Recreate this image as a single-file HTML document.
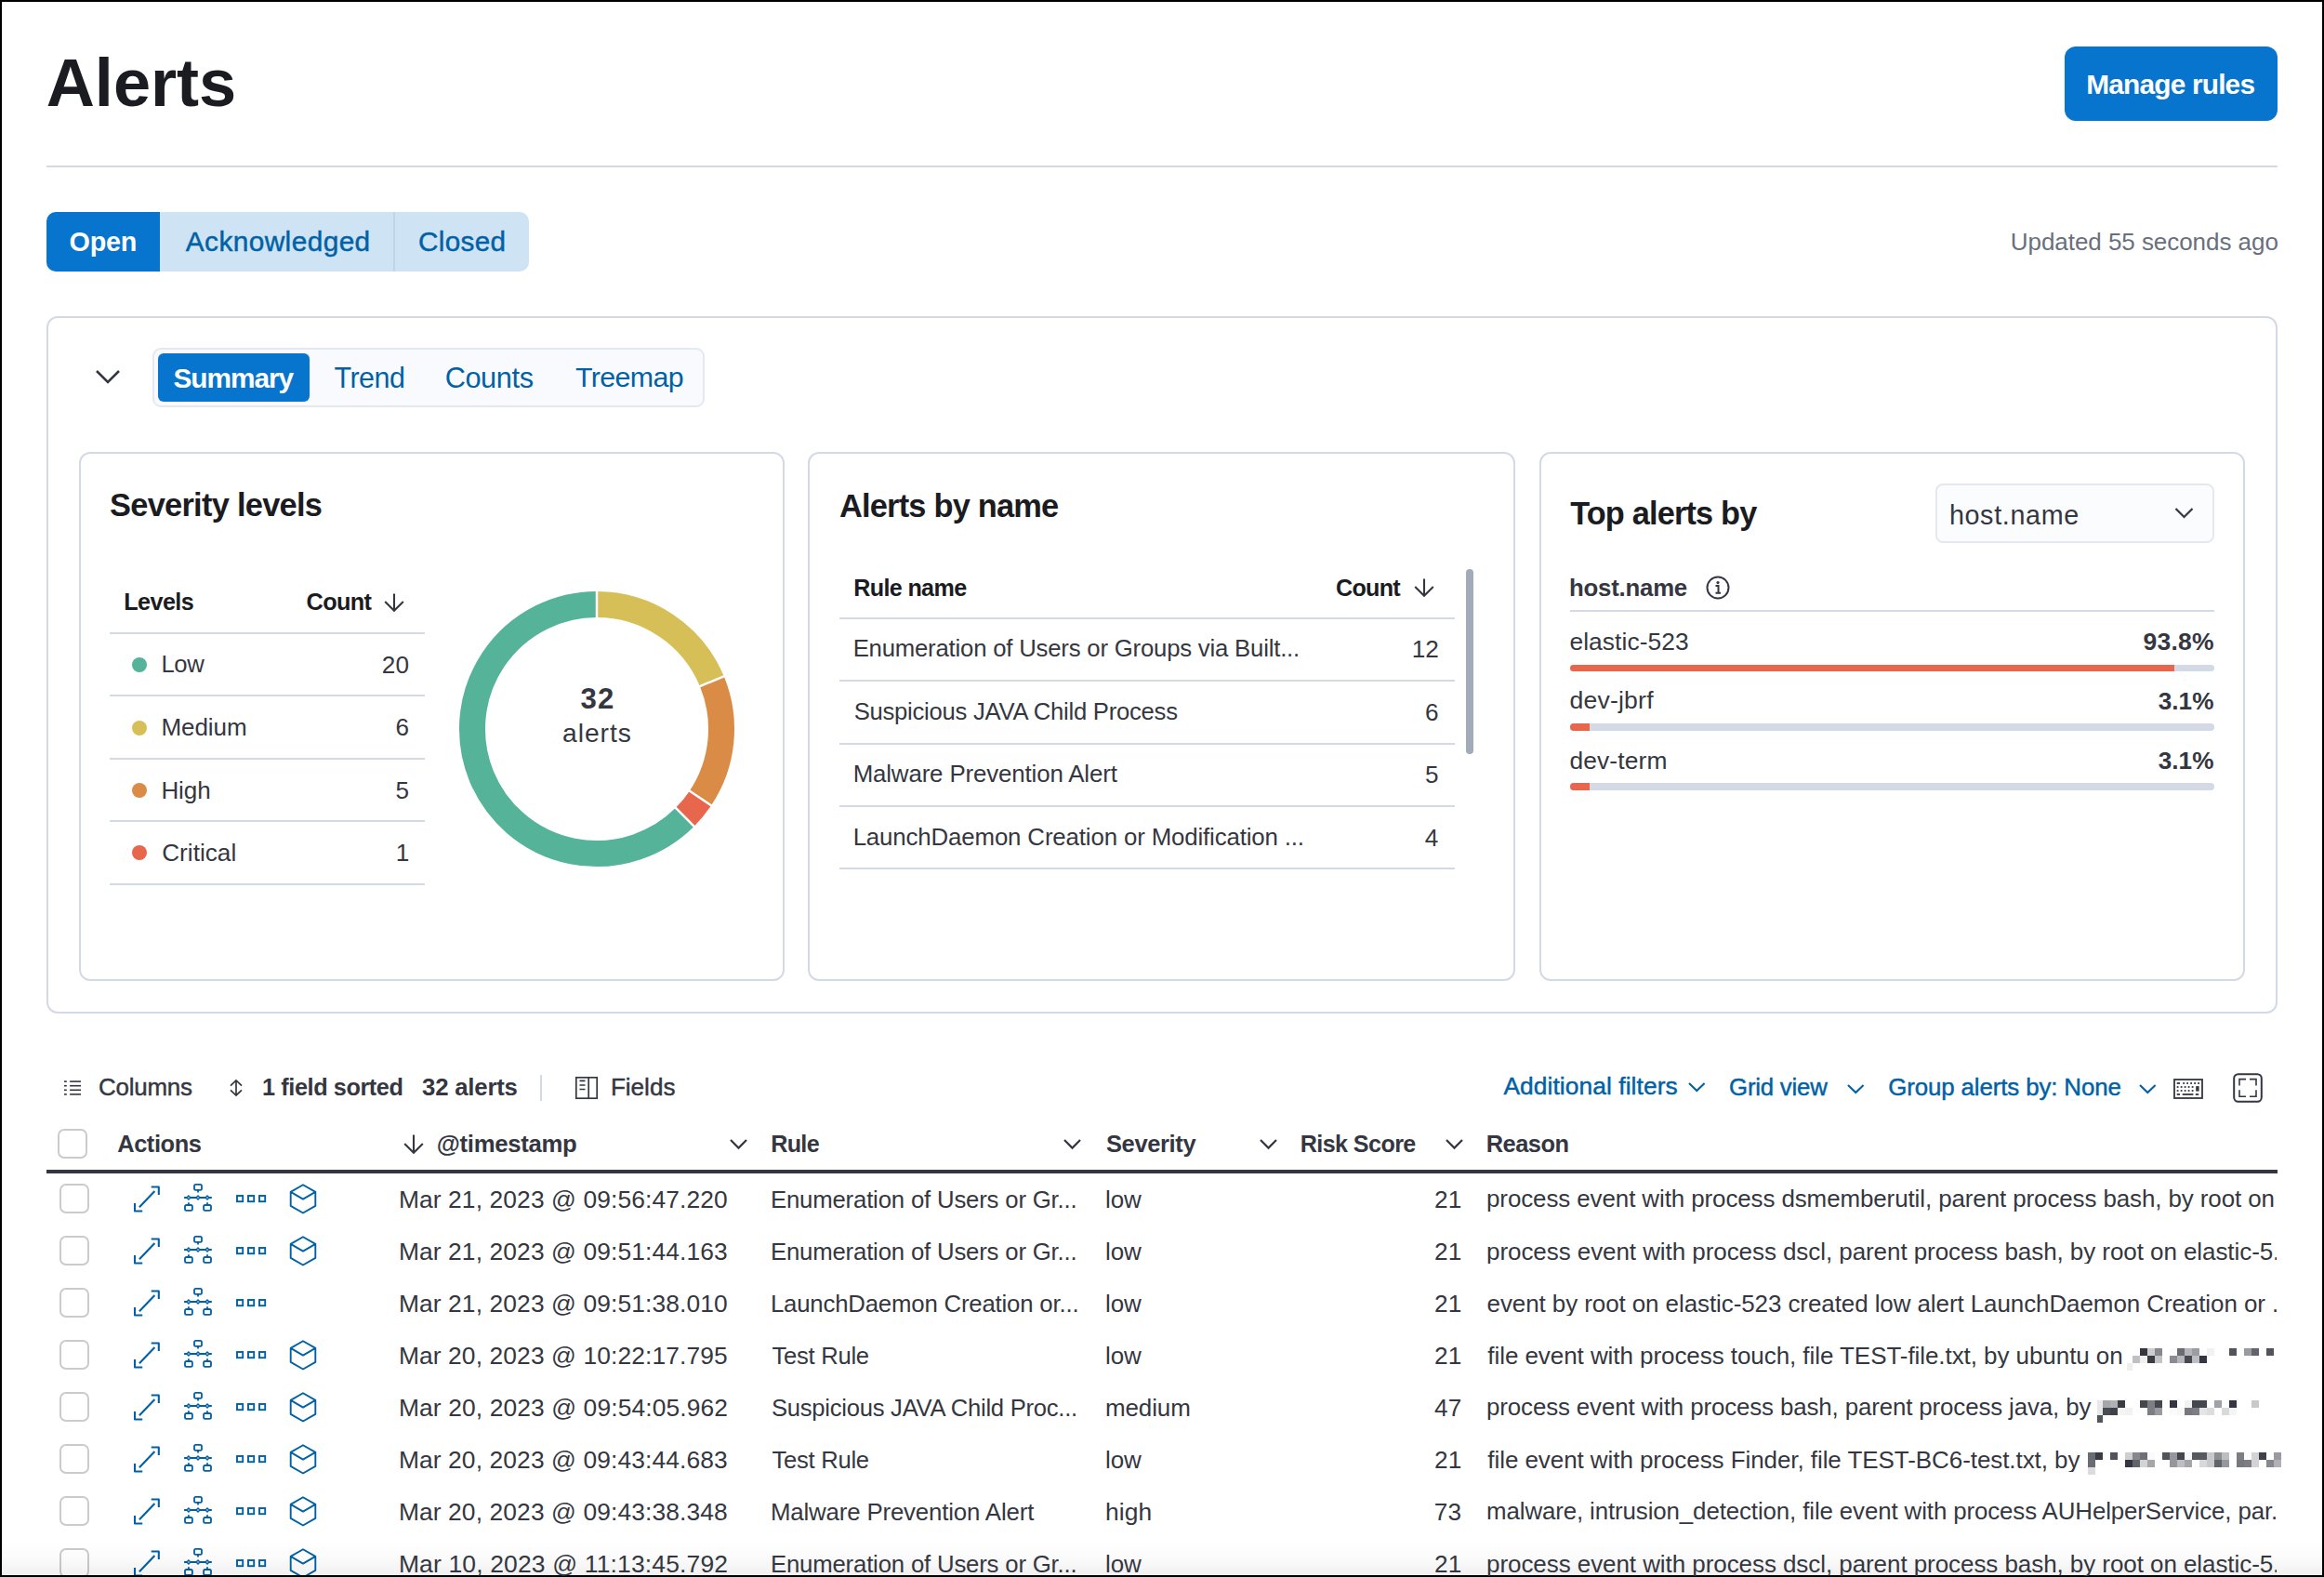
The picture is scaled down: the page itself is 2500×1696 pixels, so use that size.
<!DOCTYPE html>
<html><head><meta charset="utf-8"><style>
html,body{margin:0;padding:0;}
body{width:2500px;height:1696px;position:relative;overflow:hidden;background:#FFFFFF;font-family:"Liberation Sans",sans-serif;}
.t{position:absolute;white-space:nowrap;}
.a{position:absolute;box-sizing:border-box;}
svg{position:absolute;overflow:visible;}
</style></head><body>
<div class=a style="left:2221px;top:50px;width:229px;height:80px;background:#0774CE;border-radius:12px"></div>
<div class=a style="left:50px;top:178px;width:2400px;height:2px;background:#D3DAE6"></div>
<div class=a style="left:50px;top:228px;width:519px;height:64px;background:#CEE3F3;border-radius:10px"></div>
<div class=a style="left:50px;top:228px;width:122px;height:64px;background:#0774CE;border-radius:10px 0 0 10px"></div>
<div class=a style="left:423px;top:228px;width:2px;height:64px;background:#C1D5E6"></div>
<div class=a style="left:50px;top:340px;width:2400px;height:750px;border:2px solid #D3DAE6;border-radius:12px"></div>
<svg style="left:100px;top:394px" width="32" height="24" viewBox="0 0 32 24"><path d="M4 5 L16 17 L28 5" fill="none" stroke="#343741" stroke-width="2.6"/></svg>
<div class=a style="left:164px;top:374px;width:594px;height:64px;border:2px solid #E3E8F2;background:#F9FAFD;border-radius:9px"></div>
<div class=a style="left:170px;top:380px;width:163px;height:52px;background:#0774CE;border-radius:6px"></div>
<div class=a style="left:85px;top:486px;width:759px;height:569px;border:2px solid #D3DAE6;border-radius:12px"></div>
<div class=a style="left:869px;top:486px;width:761px;height:569px;border:2px solid #D3DAE6;border-radius:12px"></div>
<div class=a style="left:1656px;top:486px;width:759px;height:569px;border:2px solid #D3DAE6;border-radius:12px"></div>
<div class=a style="left:118px;top:680px;width:339px;height:2px;background:#D3DAE6"></div>
<div class=a style="left:118px;top:747px;width:339px;height:2px;background:#D3DAE6"></div>
<div class=a style="left:118px;top:815px;width:339px;height:2px;background:#D3DAE6"></div>
<div class=a style="left:118px;top:882px;width:339px;height:2px;background:#D3DAE6"></div>
<div class=a style="left:118px;top:950px;width:339px;height:2px;background:#D3DAE6"></div>
<div class=a style="left:142px;top:707px;width:16px;height:16px;background:#54B399;border-radius:50%"></div>
<div class=a style="left:142px;top:774.5px;width:16px;height:16.0px;background:#D6BF57;border-radius:50%"></div>
<div class=a style="left:142px;top:842px;width:16px;height:16px;background:#DA8B45;border-radius:50%"></div>
<div class=a style="left:142px;top:909.3px;width:16px;height:16.0px;background:#E7664C;border-radius:50%"></div>
<svg style="left:413px;top:638px" width="22" height="20" viewBox="0 0 22 20"><path d="M11.0 0.5 V18.7 M1.2 9 L11.0 18.7 L20.8 9" fill="none" stroke="#343741" stroke-width="2.1"/></svg>
<svg style="left:1521px;top:621.5px" width="22" height="20" viewBox="0 0 22 20"><path d="M11.0 0.5 V18.7 M1.2 9 L11.0 18.7 L20.8 9" fill="none" stroke="#343741" stroke-width="2.1"/></svg>
<svg style="left:481.70000000000005px;top:623.8px" width="320" height="320" viewBox="-160 -160 320 320"><path d="M0.00 -134.00 A134.0 134.0 0 0 1 123.80 -51.28" fill="none" stroke="#D6BF57" stroke-width="28"/><path d="M123.80 -51.28 A134.0 134.0 0 0 1 111.42 74.45" fill="none" stroke="#DA8B45" stroke-width="28"/><path d="M111.42 74.45 A134.0 134.0 0 0 1 94.75 94.75" fill="none" stroke="#E7664C" stroke-width="28"/><path d="M94.75 94.75 A134.0 134.0 0 1 1 -0.00 -134.00" fill="none" stroke="#54B399" stroke-width="28"/><line x1="109.02" y1="-45.16" x2="138.58" y2="-57.40" stroke="#FFFFFF" stroke-width="2.5"/><line x1="98.11" y1="65.56" x2="124.72" y2="83.34" stroke="#FFFFFF" stroke-width="2.5"/><line x1="83.44" y1="83.44" x2="106.07" y2="106.07" stroke="#FFFFFF" stroke-width="2.5"/><line x1="-0.00" y1="-118.00" x2="-0.00" y2="-150.00" stroke="#FFFFFF" stroke-width="2.5"/></svg>
<div class=a style="left:903px;top:664px;width:662px;height:2px;background:#D3DAE6"></div>
<div class=a style="left:903px;top:731px;width:662px;height:2px;background:#D3DAE6"></div>
<div class=a style="left:903px;top:799px;width:662px;height:2px;background:#D3DAE6"></div>
<div class=a style="left:903px;top:866px;width:662px;height:2px;background:#D3DAE6"></div>
<div class=a style="left:903px;top:933px;width:662px;height:2px;background:#D3DAE6"></div>
<div class=a style="left:1577px;top:612px;width:8px;height:199px;background:#A2ABBA;border-radius:4px"></div>
<div class=a style="left:2082px;top:520px;width:300px;height:64px;border:2px solid #E3E8F2;background:#FBFCFD;border-radius:8px"></div>
<svg style="left:2338px;top:544px" width="24" height="16" viewBox="0 0 24 16"><path d="M2.5 3 L11.5 12 L20.5 3" fill="none" stroke="#343741" stroke-width="2.2"/></svg>
<svg style="left:1834px;top:618px" width="28" height="28" viewBox="0 0 28 28"><circle cx="14" cy="14" r="11.5" fill="none" stroke="#343741" stroke-width="2"/><circle cx="14" cy="8.6" r="1.6" fill="#343741"/><path d="M11.5 12 H14.5 V19.5 M11.5 19.8 H17" fill="none" stroke="#343741" stroke-width="2"/></svg>
<div class=a style="left:1689px;top:655.5px;width:693px;height:2.0px;background:#D3DAE6"></div>
<div class=a style="left:1689px;top:714.5px;width:693px;height:7.5px;background:#D3DAE6;border-radius:4px"></div>
<div class=a style="left:1689px;top:714.5px;width:650px;height:7.5px;background:#E7664C;border-radius:4px 0 0 4px"></div>
<div class=a style="left:1689px;top:778.4px;width:693px;height:7.5px;background:#D3DAE6;border-radius:4px"></div>
<div class=a style="left:1689px;top:778.4px;width:21px;height:7.5px;background:#E7664C;border-radius:4px 0 0 4px"></div>
<div class=a style="left:1689px;top:842.3px;width:693px;height:7.5px;background:#D3DAE6;border-radius:4px"></div>
<div class=a style="left:1689px;top:842.3px;width:21px;height:7.5px;background:#E7664C;border-radius:4px 0 0 4px"></div>
<svg style="left:66px;top:1158px" width="26" height="24" viewBox="0 0 26 24"><rect x="3" y="4.3" width="2.8" height="1.6" fill="#343741"/><rect x="9.1" y="4.3" width="11.9" height="1.6" fill="#343741"/><rect x="3" y="8.899999999999999" width="2.8" height="1.6" fill="#343741"/><rect x="9.1" y="8.899999999999999" width="11.9" height="1.6" fill="#343741"/><rect x="3" y="13.5" width="2.8" height="1.6" fill="#343741"/><rect x="9.1" y="13.5" width="11.9" height="1.6" fill="#343741"/><rect x="3" y="18.099999999999998" width="2.8" height="1.6" fill="#343741"/><rect x="9.1" y="18.099999999999998" width="11.9" height="1.6" fill="#343741"/></svg>
<svg style="left:244px;top:1158px" width="20" height="24" viewBox="0 0 20 24"><path d="M10 4.2 V19.8 M4 9.6 L10 3.9 L16 9.6 M4 14.3 L10 20.0 L16 14.3" fill="none" stroke="#343741" stroke-width="1.7"/></svg>
<div class=a style="left:581px;top:1155.5px;width:2px;height:28.0px;background:#D3DAE6"></div>
<svg style="left:616px;top:1155px" width="30" height="30" viewBox="0 0 30 30"><rect x="3.8" y="3.8" width="22.4" height="22.4" fill="none" stroke="#343741" stroke-width="1.7"/><path d="M17.2 3.5 V26.5 M7.5 7.4 H13.5 M7.5 12 H13.5 M7.5 16.5 H13.5" fill="none" stroke="#343741" stroke-width="1.7"/></svg>
<svg style="left:1813.9px;top:1162.2px" width="22.6" height="14" viewBox="0 0 22.6 14"><path d="M3 3 L11.3 11 L19.6 3" fill="none" stroke="#0061A6" stroke-width="2.1"/></svg>
<svg style="left:1984.8px;top:1163.5px" width="22.6" height="14" viewBox="0 0 22.6 14"><path d="M3 3 L11.3 11 L19.6 3" fill="none" stroke="#0061A6" stroke-width="2.1"/></svg>
<svg style="left:2298.7px;top:1163.5px" width="22.6" height="14" viewBox="0 0 22.6 14"><path d="M3 3 L11.3 11 L19.6 3" fill="none" stroke="#0061A6" stroke-width="2.1"/></svg>
<svg style="left:2338px;top:1160px" width="32" height="23" viewBox="0 0 32 23"><rect x="1" y="1" width="30" height="20" fill="none" stroke="#343741" stroke-width="1.8"/><rect x="3.7" y="4.1" width="3.4" height="1.8" fill="#343741"/><rect x="10.2" y="4.1" width="1.8" height="1.8" fill="#343741"/><rect x="14.2" y="4.1" width="1.8" height="1.8" fill="#343741"/><rect x="18.2" y="4.1" width="1.8" height="1.8" fill="#343741"/><rect x="22.2" y="4.1" width="1.8" height="1.8" fill="#343741"/><rect x="26.2" y="4.1" width="1.8" height="1.8" fill="#343741"/><rect x="3.7" y="8.1" width="1.8" height="1.8" fill="#343741"/><rect x="7.7" y="8.1" width="1.8" height="1.8" fill="#343741"/><rect x="11.7" y="8.1" width="1.8" height="1.8" fill="#343741"/><rect x="15.7" y="8.1" width="1.8" height="1.8" fill="#343741"/><rect x="19.7" y="8.1" width="1.8" height="1.8" fill="#343741"/><rect x="3.7" y="12.1" width="1.8" height="1.8" fill="#343741"/><rect x="7.7" y="12.1" width="1.8" height="1.8" fill="#343741"/><rect x="11.7" y="12.1" width="1.8" height="1.8" fill="#343741"/><rect x="15.7" y="12.1" width="1.8" height="1.8" fill="#343741"/><rect x="19.7" y="12.1" width="1.8" height="1.8" fill="#343741"/><rect x="3.7" y="16.1" width="3.4" height="1.8" fill="#343741"/><rect x="9.7" y="16.1" width="11.7" height="1.8" fill="#343741"/><rect x="23.8" y="16.1" width="3.4" height="1.8" fill="#343741"/><rect x="24.2" y="8.1" width="3.4" height="5.5" fill="#343741"/></svg>
<svg style="left:2400px;top:1152px" width="36" height="36" viewBox="0 0 36 36"><rect x="3.2" y="3.2" width="29.6" height="29.6" rx="4.5" fill="none" stroke="#343741" stroke-width="2"/><path d="M16 8.6 H9 V15.6 M20 8.6 H27 V15.6 M9 20.2 V27.2 H16 M27 20.2 V27.2 H20" fill="none" stroke="#343741" stroke-width="1.6"/></svg>
<div class=a style="left:62px;top:1214px;width:32px;height:32px;border:2px solid #CACBCD;border-radius:7px;background:#fff"></div>
<svg style="left:434px;top:1220px" width="22" height="21" viewBox="0 0 22 21"><path d="M11.0 0.5 V19.7 M1.2 10 L11.0 19.7 L20.8 10" fill="none" stroke="#343741" stroke-width="2.1"/></svg>
<svg style="left:782.6px;top:1222.6px" width="23" height="14.6" viewBox="0 0 23 14.6"><path d="M3 3 L11.5 11.6 L20 3" fill="none" stroke="#343741" stroke-width="2.2"/></svg>
<svg style="left:1142.4px;top:1222.6px" width="23" height="14.6" viewBox="0 0 23 14.6"><path d="M3 3 L11.5 11.6 L20 3" fill="none" stroke="#343741" stroke-width="2.2"/></svg>
<svg style="left:1352.6px;top:1222.6px" width="23" height="14.6" viewBox="0 0 23 14.6"><path d="M3 3 L11.5 11.6 L20 3" fill="none" stroke="#343741" stroke-width="2.2"/></svg>
<svg style="left:1552.9px;top:1222.6px" width="23" height="14.6" viewBox="0 0 23 14.6"><path d="M3 3 L11.5 11.6 L20 3" fill="none" stroke="#343741" stroke-width="2.2"/></svg>
<div class=a style="left:50px;top:1258px;width:2400px;height:4px;background:#343741"></div>
<div class=a style="left:64px;top:1273.3px;width:32px;height:32.0px;border:2px solid #CACBCD;border-radius:7px;background:#fff"></div>
<svg style="left:142px;top:1273.5px" width="32" height="32" viewBox="0 0 32 32"><path d="M20.7 2.5 H28.8 V10.9 M3 19.9 V28.5 H11.2" fill="none" stroke="#0061A6" stroke-width="2.1" stroke-linejoin="round" stroke-linecap="butt"/><path d="M7.9 24.2 L24.4 7.1" fill="none" stroke="#0061A6" stroke-width="2.1"/></svg>
<svg style="left:197px;top:1273.0px" width="32" height="32" viewBox="0 0 32 32"><rect x="12.0" y="0.9" width="8.0" height="5.9" rx="1.6" fill="none" stroke="#0061A6" stroke-width="1.8"/><path d="M16 6.8 V9.6 M1.1 15 H30.8 M5.9 20.3 V23.1 M26.0 20.3 V23.1" stroke="#0061A6" stroke-width="1.8" fill="none"/><path d="M2.9000000000000004 15 L5.9 12.0 L8.9 15 L5.9 18.0 Z" fill="#0061A6"/><rect x="5.1000000000000005" y="14.2" width="1.6" height="1.6" fill="#A9C3DD"/><path d="M13.0 15 L16.0 12.0 L19.0 15 L16.0 18.0 Z" fill="#0061A6"/><rect x="15.2" y="14.2" width="1.6" height="1.6" fill="#A9C3DD"/><path d="M23.0 15 L26.0 12.0 L29.0 15 L26.0 18.0 Z" fill="#0061A6"/><rect x="25.2" y="14.2" width="1.6" height="1.6" fill="#A9C3DD"/><rect x="2.0" y="23.0" width="7.9" height="5.8" rx="1.6" fill="none" stroke="#0061A6" stroke-width="1.8"/><rect x="22.1" y="23.0" width="7.9" height="5.8" rx="1.6" fill="none" stroke="#0061A6" stroke-width="1.8"/></svg>
<svg style="left:254px;top:1284.7px" width="34" height="9" viewBox="0 0 34 9"><rect x="1" y="1" width="6.2" height="6.2" fill="none" stroke="#0061A6" stroke-width="1.9"/><rect x="13" y="1" width="6.2" height="6.2" fill="none" stroke="#0061A6" stroke-width="1.9"/><rect x="25" y="1" width="6.2" height="6.2" fill="none" stroke="#0061A6" stroke-width="1.9"/></svg>
<svg style="left:310px;top:1272.5px" width="32" height="34" viewBox="0 0 32 34"><path d="M16 1.3 L29.3 8.9 V23.9 L16 31.5 L2.7 23.9 V8.9 Z M2.7 8.9 L16 16.6 L29.3 8.9" fill="none" stroke="#0061A6" stroke-width="1.9" stroke-linejoin="round"/></svg>
<div class=a style="left:64px;top:1329.3px;width:32px;height:32.0px;border:2px solid #CACBCD;border-radius:7px;background:#fff"></div>
<svg style="left:142px;top:1329.5px" width="32" height="32" viewBox="0 0 32 32"><path d="M20.7 2.5 H28.8 V10.9 M3 19.9 V28.5 H11.2" fill="none" stroke="#0061A6" stroke-width="2.1" stroke-linejoin="round" stroke-linecap="butt"/><path d="M7.9 24.2 L24.4 7.1" fill="none" stroke="#0061A6" stroke-width="2.1"/></svg>
<svg style="left:197px;top:1329.0px" width="32" height="32" viewBox="0 0 32 32"><rect x="12.0" y="0.9" width="8.0" height="5.9" rx="1.6" fill="none" stroke="#0061A6" stroke-width="1.8"/><path d="M16 6.8 V9.6 M1.1 15 H30.8 M5.9 20.3 V23.1 M26.0 20.3 V23.1" stroke="#0061A6" stroke-width="1.8" fill="none"/><path d="M2.9000000000000004 15 L5.9 12.0 L8.9 15 L5.9 18.0 Z" fill="#0061A6"/><rect x="5.1000000000000005" y="14.2" width="1.6" height="1.6" fill="#A9C3DD"/><path d="M13.0 15 L16.0 12.0 L19.0 15 L16.0 18.0 Z" fill="#0061A6"/><rect x="15.2" y="14.2" width="1.6" height="1.6" fill="#A9C3DD"/><path d="M23.0 15 L26.0 12.0 L29.0 15 L26.0 18.0 Z" fill="#0061A6"/><rect x="25.2" y="14.2" width="1.6" height="1.6" fill="#A9C3DD"/><rect x="2.0" y="23.0" width="7.9" height="5.8" rx="1.6" fill="none" stroke="#0061A6" stroke-width="1.8"/><rect x="22.1" y="23.0" width="7.9" height="5.8" rx="1.6" fill="none" stroke="#0061A6" stroke-width="1.8"/></svg>
<svg style="left:254px;top:1340.7px" width="34" height="9" viewBox="0 0 34 9"><rect x="1" y="1" width="6.2" height="6.2" fill="none" stroke="#0061A6" stroke-width="1.9"/><rect x="13" y="1" width="6.2" height="6.2" fill="none" stroke="#0061A6" stroke-width="1.9"/><rect x="25" y="1" width="6.2" height="6.2" fill="none" stroke="#0061A6" stroke-width="1.9"/></svg>
<svg style="left:310px;top:1328.5px" width="32" height="34" viewBox="0 0 32 34"><path d="M16 1.3 L29.3 8.9 V23.9 L16 31.5 L2.7 23.9 V8.9 Z M2.7 8.9 L16 16.6 L29.3 8.9" fill="none" stroke="#0061A6" stroke-width="1.9" stroke-linejoin="round"/></svg>
<div class=a style="left:64px;top:1385.3px;width:32px;height:32.0px;border:2px solid #CACBCD;border-radius:7px;background:#fff"></div>
<svg style="left:142px;top:1385.5px" width="32" height="32" viewBox="0 0 32 32"><path d="M20.7 2.5 H28.8 V10.9 M3 19.9 V28.5 H11.2" fill="none" stroke="#0061A6" stroke-width="2.1" stroke-linejoin="round" stroke-linecap="butt"/><path d="M7.9 24.2 L24.4 7.1" fill="none" stroke="#0061A6" stroke-width="2.1"/></svg>
<svg style="left:197px;top:1385.0px" width="32" height="32" viewBox="0 0 32 32"><rect x="12.0" y="0.9" width="8.0" height="5.9" rx="1.6" fill="none" stroke="#0061A6" stroke-width="1.8"/><path d="M16 6.8 V9.6 M1.1 15 H30.8 M5.9 20.3 V23.1 M26.0 20.3 V23.1" stroke="#0061A6" stroke-width="1.8" fill="none"/><path d="M2.9000000000000004 15 L5.9 12.0 L8.9 15 L5.9 18.0 Z" fill="#0061A6"/><rect x="5.1000000000000005" y="14.2" width="1.6" height="1.6" fill="#A9C3DD"/><path d="M13.0 15 L16.0 12.0 L19.0 15 L16.0 18.0 Z" fill="#0061A6"/><rect x="15.2" y="14.2" width="1.6" height="1.6" fill="#A9C3DD"/><path d="M23.0 15 L26.0 12.0 L29.0 15 L26.0 18.0 Z" fill="#0061A6"/><rect x="25.2" y="14.2" width="1.6" height="1.6" fill="#A9C3DD"/><rect x="2.0" y="23.0" width="7.9" height="5.8" rx="1.6" fill="none" stroke="#0061A6" stroke-width="1.8"/><rect x="22.1" y="23.0" width="7.9" height="5.8" rx="1.6" fill="none" stroke="#0061A6" stroke-width="1.8"/></svg>
<svg style="left:254px;top:1396.7px" width="34" height="9" viewBox="0 0 34 9"><rect x="1" y="1" width="6.2" height="6.2" fill="none" stroke="#0061A6" stroke-width="1.9"/><rect x="13" y="1" width="6.2" height="6.2" fill="none" stroke="#0061A6" stroke-width="1.9"/><rect x="25" y="1" width="6.2" height="6.2" fill="none" stroke="#0061A6" stroke-width="1.9"/></svg>
<div class=a style="left:64px;top:1441.3px;width:32px;height:32.0px;border:2px solid #CACBCD;border-radius:7px;background:#fff"></div>
<svg style="left:142px;top:1441.5px" width="32" height="32" viewBox="0 0 32 32"><path d="M20.7 2.5 H28.8 V10.9 M3 19.9 V28.5 H11.2" fill="none" stroke="#0061A6" stroke-width="2.1" stroke-linejoin="round" stroke-linecap="butt"/><path d="M7.9 24.2 L24.4 7.1" fill="none" stroke="#0061A6" stroke-width="2.1"/></svg>
<svg style="left:197px;top:1441.0px" width="32" height="32" viewBox="0 0 32 32"><rect x="12.0" y="0.9" width="8.0" height="5.9" rx="1.6" fill="none" stroke="#0061A6" stroke-width="1.8"/><path d="M16 6.8 V9.6 M1.1 15 H30.8 M5.9 20.3 V23.1 M26.0 20.3 V23.1" stroke="#0061A6" stroke-width="1.8" fill="none"/><path d="M2.9000000000000004 15 L5.9 12.0 L8.9 15 L5.9 18.0 Z" fill="#0061A6"/><rect x="5.1000000000000005" y="14.2" width="1.6" height="1.6" fill="#A9C3DD"/><path d="M13.0 15 L16.0 12.0 L19.0 15 L16.0 18.0 Z" fill="#0061A6"/><rect x="15.2" y="14.2" width="1.6" height="1.6" fill="#A9C3DD"/><path d="M23.0 15 L26.0 12.0 L29.0 15 L26.0 18.0 Z" fill="#0061A6"/><rect x="25.2" y="14.2" width="1.6" height="1.6" fill="#A9C3DD"/><rect x="2.0" y="23.0" width="7.9" height="5.8" rx="1.6" fill="none" stroke="#0061A6" stroke-width="1.8"/><rect x="22.1" y="23.0" width="7.9" height="5.8" rx="1.6" fill="none" stroke="#0061A6" stroke-width="1.8"/></svg>
<svg style="left:254px;top:1452.7px" width="34" height="9" viewBox="0 0 34 9"><rect x="1" y="1" width="6.2" height="6.2" fill="none" stroke="#0061A6" stroke-width="1.9"/><rect x="13" y="1" width="6.2" height="6.2" fill="none" stroke="#0061A6" stroke-width="1.9"/><rect x="25" y="1" width="6.2" height="6.2" fill="none" stroke="#0061A6" stroke-width="1.9"/></svg>
<svg style="left:310px;top:1440.5px" width="32" height="34" viewBox="0 0 32 34"><path d="M16 1.3 L29.3 8.9 V23.9 L16 31.5 L2.7 23.9 V8.9 Z M2.7 8.9 L16 16.6 L29.3 8.9" fill="none" stroke="#0061A6" stroke-width="1.9" stroke-linejoin="round"/></svg>
<div class=a style="left:64px;top:1497.3px;width:32px;height:32.0px;border:2px solid #CACBCD;border-radius:7px;background:#fff"></div>
<svg style="left:142px;top:1497.5px" width="32" height="32" viewBox="0 0 32 32"><path d="M20.7 2.5 H28.8 V10.9 M3 19.9 V28.5 H11.2" fill="none" stroke="#0061A6" stroke-width="2.1" stroke-linejoin="round" stroke-linecap="butt"/><path d="M7.9 24.2 L24.4 7.1" fill="none" stroke="#0061A6" stroke-width="2.1"/></svg>
<svg style="left:197px;top:1497.0px" width="32" height="32" viewBox="0 0 32 32"><rect x="12.0" y="0.9" width="8.0" height="5.9" rx="1.6" fill="none" stroke="#0061A6" stroke-width="1.8"/><path d="M16 6.8 V9.6 M1.1 15 H30.8 M5.9 20.3 V23.1 M26.0 20.3 V23.1" stroke="#0061A6" stroke-width="1.8" fill="none"/><path d="M2.9000000000000004 15 L5.9 12.0 L8.9 15 L5.9 18.0 Z" fill="#0061A6"/><rect x="5.1000000000000005" y="14.2" width="1.6" height="1.6" fill="#A9C3DD"/><path d="M13.0 15 L16.0 12.0 L19.0 15 L16.0 18.0 Z" fill="#0061A6"/><rect x="15.2" y="14.2" width="1.6" height="1.6" fill="#A9C3DD"/><path d="M23.0 15 L26.0 12.0 L29.0 15 L26.0 18.0 Z" fill="#0061A6"/><rect x="25.2" y="14.2" width="1.6" height="1.6" fill="#A9C3DD"/><rect x="2.0" y="23.0" width="7.9" height="5.8" rx="1.6" fill="none" stroke="#0061A6" stroke-width="1.8"/><rect x="22.1" y="23.0" width="7.9" height="5.8" rx="1.6" fill="none" stroke="#0061A6" stroke-width="1.8"/></svg>
<svg style="left:254px;top:1508.7px" width="34" height="9" viewBox="0 0 34 9"><rect x="1" y="1" width="6.2" height="6.2" fill="none" stroke="#0061A6" stroke-width="1.9"/><rect x="13" y="1" width="6.2" height="6.2" fill="none" stroke="#0061A6" stroke-width="1.9"/><rect x="25" y="1" width="6.2" height="6.2" fill="none" stroke="#0061A6" stroke-width="1.9"/></svg>
<svg style="left:310px;top:1496.5px" width="32" height="34" viewBox="0 0 32 34"><path d="M16 1.3 L29.3 8.9 V23.9 L16 31.5 L2.7 23.9 V8.9 Z M2.7 8.9 L16 16.6 L29.3 8.9" fill="none" stroke="#0061A6" stroke-width="1.9" stroke-linejoin="round"/></svg>
<div class=a style="left:64px;top:1553.3px;width:32px;height:32.0px;border:2px solid #CACBCD;border-radius:7px;background:#fff"></div>
<svg style="left:142px;top:1553.5px" width="32" height="32" viewBox="0 0 32 32"><path d="M20.7 2.5 H28.8 V10.9 M3 19.9 V28.5 H11.2" fill="none" stroke="#0061A6" stroke-width="2.1" stroke-linejoin="round" stroke-linecap="butt"/><path d="M7.9 24.2 L24.4 7.1" fill="none" stroke="#0061A6" stroke-width="2.1"/></svg>
<svg style="left:197px;top:1553.0px" width="32" height="32" viewBox="0 0 32 32"><rect x="12.0" y="0.9" width="8.0" height="5.9" rx="1.6" fill="none" stroke="#0061A6" stroke-width="1.8"/><path d="M16 6.8 V9.6 M1.1 15 H30.8 M5.9 20.3 V23.1 M26.0 20.3 V23.1" stroke="#0061A6" stroke-width="1.8" fill="none"/><path d="M2.9000000000000004 15 L5.9 12.0 L8.9 15 L5.9 18.0 Z" fill="#0061A6"/><rect x="5.1000000000000005" y="14.2" width="1.6" height="1.6" fill="#A9C3DD"/><path d="M13.0 15 L16.0 12.0 L19.0 15 L16.0 18.0 Z" fill="#0061A6"/><rect x="15.2" y="14.2" width="1.6" height="1.6" fill="#A9C3DD"/><path d="M23.0 15 L26.0 12.0 L29.0 15 L26.0 18.0 Z" fill="#0061A6"/><rect x="25.2" y="14.2" width="1.6" height="1.6" fill="#A9C3DD"/><rect x="2.0" y="23.0" width="7.9" height="5.8" rx="1.6" fill="none" stroke="#0061A6" stroke-width="1.8"/><rect x="22.1" y="23.0" width="7.9" height="5.8" rx="1.6" fill="none" stroke="#0061A6" stroke-width="1.8"/></svg>
<svg style="left:254px;top:1564.7px" width="34" height="9" viewBox="0 0 34 9"><rect x="1" y="1" width="6.2" height="6.2" fill="none" stroke="#0061A6" stroke-width="1.9"/><rect x="13" y="1" width="6.2" height="6.2" fill="none" stroke="#0061A6" stroke-width="1.9"/><rect x="25" y="1" width="6.2" height="6.2" fill="none" stroke="#0061A6" stroke-width="1.9"/></svg>
<svg style="left:310px;top:1552.5px" width="32" height="34" viewBox="0 0 32 34"><path d="M16 1.3 L29.3 8.9 V23.9 L16 31.5 L2.7 23.9 V8.9 Z M2.7 8.9 L16 16.6 L29.3 8.9" fill="none" stroke="#0061A6" stroke-width="1.9" stroke-linejoin="round"/></svg>
<div class=a style="left:64px;top:1609.3px;width:32px;height:32.0px;border:2px solid #CACBCD;border-radius:7px;background:#fff"></div>
<svg style="left:142px;top:1609.5px" width="32" height="32" viewBox="0 0 32 32"><path d="M20.7 2.5 H28.8 V10.9 M3 19.9 V28.5 H11.2" fill="none" stroke="#0061A6" stroke-width="2.1" stroke-linejoin="round" stroke-linecap="butt"/><path d="M7.9 24.2 L24.4 7.1" fill="none" stroke="#0061A6" stroke-width="2.1"/></svg>
<svg style="left:197px;top:1609.0px" width="32" height="32" viewBox="0 0 32 32"><rect x="12.0" y="0.9" width="8.0" height="5.9" rx="1.6" fill="none" stroke="#0061A6" stroke-width="1.8"/><path d="M16 6.8 V9.6 M1.1 15 H30.8 M5.9 20.3 V23.1 M26.0 20.3 V23.1" stroke="#0061A6" stroke-width="1.8" fill="none"/><path d="M2.9000000000000004 15 L5.9 12.0 L8.9 15 L5.9 18.0 Z" fill="#0061A6"/><rect x="5.1000000000000005" y="14.2" width="1.6" height="1.6" fill="#A9C3DD"/><path d="M13.0 15 L16.0 12.0 L19.0 15 L16.0 18.0 Z" fill="#0061A6"/><rect x="15.2" y="14.2" width="1.6" height="1.6" fill="#A9C3DD"/><path d="M23.0 15 L26.0 12.0 L29.0 15 L26.0 18.0 Z" fill="#0061A6"/><rect x="25.2" y="14.2" width="1.6" height="1.6" fill="#A9C3DD"/><rect x="2.0" y="23.0" width="7.9" height="5.8" rx="1.6" fill="none" stroke="#0061A6" stroke-width="1.8"/><rect x="22.1" y="23.0" width="7.9" height="5.8" rx="1.6" fill="none" stroke="#0061A6" stroke-width="1.8"/></svg>
<svg style="left:254px;top:1620.7px" width="34" height="9" viewBox="0 0 34 9"><rect x="1" y="1" width="6.2" height="6.2" fill="none" stroke="#0061A6" stroke-width="1.9"/><rect x="13" y="1" width="6.2" height="6.2" fill="none" stroke="#0061A6" stroke-width="1.9"/><rect x="25" y="1" width="6.2" height="6.2" fill="none" stroke="#0061A6" stroke-width="1.9"/></svg>
<svg style="left:310px;top:1608.5px" width="32" height="34" viewBox="0 0 32 34"><path d="M16 1.3 L29.3 8.9 V23.9 L16 31.5 L2.7 23.9 V8.9 Z M2.7 8.9 L16 16.6 L29.3 8.9" fill="none" stroke="#0061A6" stroke-width="1.9" stroke-linejoin="round"/></svg>
<div class=a style="left:64px;top:1665.3px;width:32px;height:32.0px;border:2px solid #CACBCD;border-radius:7px;background:#fff"></div>
<svg style="left:142px;top:1665.5px" width="32" height="32" viewBox="0 0 32 32"><path d="M20.7 2.5 H28.8 V10.9 M3 19.9 V28.5 H11.2" fill="none" stroke="#0061A6" stroke-width="2.1" stroke-linejoin="round" stroke-linecap="butt"/><path d="M7.9 24.2 L24.4 7.1" fill="none" stroke="#0061A6" stroke-width="2.1"/></svg>
<svg style="left:197px;top:1665.0px" width="32" height="32" viewBox="0 0 32 32"><rect x="12.0" y="0.9" width="8.0" height="5.9" rx="1.6" fill="none" stroke="#0061A6" stroke-width="1.8"/><path d="M16 6.8 V9.6 M1.1 15 H30.8 M5.9 20.3 V23.1 M26.0 20.3 V23.1" stroke="#0061A6" stroke-width="1.8" fill="none"/><path d="M2.9000000000000004 15 L5.9 12.0 L8.9 15 L5.9 18.0 Z" fill="#0061A6"/><rect x="5.1000000000000005" y="14.2" width="1.6" height="1.6" fill="#A9C3DD"/><path d="M13.0 15 L16.0 12.0 L19.0 15 L16.0 18.0 Z" fill="#0061A6"/><rect x="15.2" y="14.2" width="1.6" height="1.6" fill="#A9C3DD"/><path d="M23.0 15 L26.0 12.0 L29.0 15 L26.0 18.0 Z" fill="#0061A6"/><rect x="25.2" y="14.2" width="1.6" height="1.6" fill="#A9C3DD"/><rect x="2.0" y="23.0" width="7.9" height="5.8" rx="1.6" fill="none" stroke="#0061A6" stroke-width="1.8"/><rect x="22.1" y="23.0" width="7.9" height="5.8" rx="1.6" fill="none" stroke="#0061A6" stroke-width="1.8"/></svg>
<svg style="left:254px;top:1676.7px" width="34" height="9" viewBox="0 0 34 9"><rect x="1" y="1" width="6.2" height="6.2" fill="none" stroke="#0061A6" stroke-width="1.9"/><rect x="13" y="1" width="6.2" height="6.2" fill="none" stroke="#0061A6" stroke-width="1.9"/><rect x="25" y="1" width="6.2" height="6.2" fill="none" stroke="#0061A6" stroke-width="1.9"/></svg>
<svg style="left:310px;top:1664.5px" width="32" height="34" viewBox="0 0 32 34"><path d="M16 1.3 L29.3 8.9 V23.9 L16 31.5 L2.7 23.9 V8.9 Z M2.7 8.9 L16 16.6 L29.3 8.9" fill="none" stroke="#0061A6" stroke-width="1.9" stroke-linejoin="round"/></svg>
<div class=a style="left:2302.10px;top:1450.10px;width:8.02px;height:8.02px;background:#343741"></div>
<div class=a style="left:2310.11px;top:1450.10px;width:8.02px;height:8.02px;background:#CDCDD0"></div>
<div class=a style="left:2318.13px;top:1450.10px;width:8.02px;height:8.02px;background:#86888E"></div>
<div class=a style="left:2334.16px;top:1450.10px;width:8.02px;height:8.02px;background:#FAFAFA"></div>
<div class=a style="left:2342.18px;top:1450.10px;width:8.02px;height:8.02px;background:#6A6B73"></div>
<div class=a style="left:2350.19px;top:1450.10px;width:8.02px;height:8.02px;background:#B5B6BA"></div>
<div class=a style="left:2358.21px;top:1450.10px;width:8.02px;height:8.02px;background:#9C9DA2"></div>
<div class=a style="left:2374.24px;top:1450.10px;width:8.02px;height:8.02px;background:#F2F2F2"></div>
<div class=a style="left:2398.29px;top:1450.10px;width:8.02px;height:8.02px;background:#52545C"></div>
<div class=a style="left:2414.32px;top:1450.10px;width:8.02px;height:8.02px;background:#9A9BA0"></div>
<div class=a style="left:2422.34px;top:1450.10px;width:8.02px;height:8.02px;background:#62646B"></div>
<div class=a style="left:2438.37px;top:1450.10px;width:8.02px;height:8.02px;background:#52545C"></div>
<div class=a style="left:2294.08px;top:1458.12px;width:8.02px;height:8.02px;background:#BFC0C4"></div>
<div class=a style="left:2302.10px;top:1458.12px;width:8.02px;height:8.02px;background:#F0F0F0"></div>
<div class=a style="left:2310.11px;top:1458.12px;width:8.02px;height:8.02px;background:#3A3C44"></div>
<div class=a style="left:2318.13px;top:1458.12px;width:8.02px;height:8.02px;background:#C4C4C6"></div>
<div class=a style="left:2334.16px;top:1458.12px;width:8.02px;height:8.02px;background:#8A8B90"></div>
<div class=a style="left:2342.18px;top:1458.12px;width:8.02px;height:8.02px;background:#B5B6BA"></div>
<div class=a style="left:2350.19px;top:1458.12px;width:8.02px;height:8.02px;background:#474950"></div>
<div class=a style="left:2358.21px;top:1458.12px;width:8.02px;height:8.02px;background:#BDBEC1"></div>
<div class=a style="left:2366.22px;top:1458.12px;width:8.02px;height:8.02px;background:#343741"></div>
<div class=a style="left:2288.1px;top:1466.13px;width:6px;height:8.02px;background:#EEEEEE"></div>
<div class=a style="left:2256px;top:1506.2px;width:6.1px;height:16px;background:#E8E8EA"></div>
<div class=a style="left:2256px;top:1522.2px;width:6.1px;height:8px;background:#52545C"></div>
<div class=a style="left:2262.02px;top:1506.20px;width:8.02px;height:8.02px;background:#A5A6AA"></div>
<div class=a style="left:2270.03px;top:1506.20px;width:8.02px;height:8.02px;background:#B0B1B5"></div>
<div class=a style="left:2278.05px;top:1506.20px;width:8.02px;height:8.02px;background:#3A3C44"></div>
<div class=a style="left:2302.10px;top:1506.20px;width:8.02px;height:8.02px;background:#45474F"></div>
<div class=a style="left:2310.11px;top:1506.20px;width:8.02px;height:8.02px;background:#7D7E84"></div>
<div class=a style="left:2318.13px;top:1506.20px;width:8.02px;height:8.02px;background:#45474F"></div>
<div class=a style="left:2334.16px;top:1506.20px;width:8.02px;height:8.02px;background:#343741"></div>
<div class=a style="left:2350.19px;top:1506.20px;width:8.02px;height:8.02px;background:#F2F2F3"></div>
<div class=a style="left:2358.21px;top:1506.20px;width:8.02px;height:8.02px;background:#45474F"></div>
<div class=a style="left:2366.22px;top:1506.20px;width:8.02px;height:8.02px;background:#45474F"></div>
<div class=a style="left:2382.26px;top:1506.20px;width:8.02px;height:8.02px;background:#A0A1A6"></div>
<div class=a style="left:2398.29px;top:1506.20px;width:8.02px;height:8.02px;background:#343741"></div>
<div class=a style="left:2422.34px;top:1506.20px;width:8.02px;height:8.02px;background:#C8C8CB"></div>
<div class=a style="left:2262.02px;top:1514.22px;width:8.02px;height:8.02px;background:#4A4C54"></div>
<div class=a style="left:2270.03px;top:1514.22px;width:8.02px;height:8.02px;background:#3F4149"></div>
<div class=a style="left:2278.05px;top:1514.22px;width:8.02px;height:8.02px;background:#F5F5F5"></div>
<div class=a style="left:2286.06px;top:1514.22px;width:8.02px;height:8.02px;background:#F2F2F2"></div>
<div class=a style="left:2310.11px;top:1514.22px;width:8.02px;height:8.02px;background:#7D7E84"></div>
<div class=a style="left:2318.13px;top:1514.22px;width:8.02px;height:8.02px;background:#9A9BA0"></div>
<div class=a style="left:2334.16px;top:1514.22px;width:8.02px;height:8.02px;background:#FBFBFB"></div>
<div class=a style="left:2342.18px;top:1514.22px;width:8.02px;height:8.02px;background:#F8F8F8"></div>
<div class=a style="left:2350.19px;top:1514.22px;width:8.02px;height:8.02px;background:#77787E"></div>
<div class=a style="left:2358.21px;top:1514.22px;width:8.02px;height:8.02px;background:#7D7E84"></div>
<div class=a style="left:2366.22px;top:1514.22px;width:8.02px;height:8.02px;background:#E5E5E6"></div>
<div class=a style="left:2374.24px;top:1514.22px;width:8.02px;height:8.02px;background:#DDDDDF"></div>
<div class=a style="left:2390.27px;top:1514.22px;width:8.02px;height:8.02px;background:#D8D9DB"></div>
<div class=a style="left:2398.29px;top:1514.22px;width:8.02px;height:8.02px;background:#F5F5F5"></div>
<div class=a style="left:2245.98px;top:1562.20px;width:8.02px;height:8.02px;background:#6A6C73"></div>
<div class=a style="left:2254.00px;top:1562.20px;width:8.02px;height:8.02px;background:#3A3C44"></div>
<div class=a style="left:2270.03px;top:1562.20px;width:8.02px;height:8.02px;background:#52545C"></div>
<div class=a style="left:2286.06px;top:1562.20px;width:8.02px;height:8.02px;background:#CFCFD1"></div>
<div class=a style="left:2294.08px;top:1562.20px;width:8.02px;height:8.02px;background:#86888E"></div>
<div class=a style="left:2302.10px;top:1562.20px;width:8.02px;height:8.02px;background:#6E7076"></div>
<div class=a style="left:2310.11px;top:1562.20px;width:8.02px;height:8.02px;background:#FAFAFA"></div>
<div class=a style="left:2326.14px;top:1562.20px;width:8.02px;height:8.02px;background:#52545C"></div>
<div class=a style="left:2334.16px;top:1562.20px;width:8.02px;height:8.02px;background:#96979C"></div>
<div class=a style="left:2342.18px;top:1562.20px;width:8.02px;height:8.02px;background:#45454E"></div>
<div class=a style="left:2350.19px;top:1562.20px;width:8.02px;height:8.02px;background:#F7F7F7"></div>
<div class=a style="left:2358.21px;top:1562.20px;width:8.02px;height:8.02px;background:#575960"></div>
<div class=a style="left:2366.22px;top:1562.20px;width:8.02px;height:8.02px;background:#575960"></div>
<div class=a style="left:2374.24px;top:1562.20px;width:8.02px;height:8.02px;background:#C8C9CB"></div>
<div class=a style="left:2382.26px;top:1562.20px;width:8.02px;height:8.02px;background:#8E8F94"></div>
<div class=a style="left:2390.27px;top:1562.20px;width:8.02px;height:8.02px;background:#BDBEC1"></div>
<div class=a style="left:2406.30px;top:1562.20px;width:8.02px;height:8.02px;background:#7D7E84"></div>
<div class=a style="left:2414.32px;top:1562.20px;width:8.02px;height:8.02px;background:#FCFCFC"></div>
<div class=a style="left:2422.34px;top:1562.20px;width:8.02px;height:8.02px;background:#D3D3D5"></div>
<div class=a style="left:2430.35px;top:1562.20px;width:8.02px;height:8.02px;background:#3F4149"></div>
<div class=a style="left:2446.38px;top:1562.20px;width:8.02px;height:8.02px;background:#9A9BA0"></div>
<div class=a style="left:2245.98px;top:1570.22px;width:8.02px;height:8.02px;background:#6A6C73"></div>
<div class=a style="left:2286.06px;top:1570.22px;width:8.02px;height:8.02px;background:#343741"></div>
<div class=a style="left:2294.08px;top:1570.22px;width:8.02px;height:8.02px;background:#62646B"></div>
<div class=a style="left:2302.10px;top:1570.22px;width:8.02px;height:8.02px;background:#D3D3D5"></div>
<div class=a style="left:2310.11px;top:1570.22px;width:8.02px;height:8.02px;background:#A5A6AA"></div>
<div class=a style="left:2334.16px;top:1570.22px;width:8.02px;height:8.02px;background:#96979C"></div>
<div class=a style="left:2342.18px;top:1570.22px;width:8.02px;height:8.02px;background:#BDBEC1"></div>
<div class=a style="left:2350.19px;top:1570.22px;width:8.02px;height:8.02px;background:#A5A6AA"></div>
<div class=a style="left:2366.22px;top:1570.22px;width:8.02px;height:8.02px;background:#D8D8DA"></div>
<div class=a style="left:2374.24px;top:1570.22px;width:8.02px;height:8.02px;background:#C8C9CB"></div>
<div class=a style="left:2382.26px;top:1570.22px;width:8.02px;height:8.02px;background:#62646B"></div>
<div class=a style="left:2390.27px;top:1570.22px;width:8.02px;height:8.02px;background:#96979C"></div>
<div class=a style="left:2406.30px;top:1570.22px;width:8.02px;height:8.02px;background:#77787E"></div>
<div class=a style="left:2414.32px;top:1570.22px;width:8.02px;height:8.02px;background:#7D7E84"></div>
<div class=a style="left:2422.34px;top:1570.22px;width:8.02px;height:8.02px;background:#D3D3D5"></div>
<div class=a style="left:2438.37px;top:1570.22px;width:8.02px;height:8.02px;background:#86888E"></div>
<div class=a style="left:2446.38px;top:1570.22px;width:8.02px;height:8.02px;background:#B0B1B5"></div>
<div class=a style="left:2245.98px;top:1578.23px;width:8.02px;height:8.02px;background:#DCDCDE"></div>
<div class=a style="left:0;top:1656px;width:2500px;height:38px;background:linear-gradient(to bottom,rgba(0,0,0,0) 0%,rgba(0,0,0,0.015) 50%,rgba(0,0,0,0.058) 100%)"></div>
<div class=a style="left:0;top:0;width:2500px;height:1696px;border:2px solid #000"></div>
<div class=t style="left:49.76px;top:53.48px;font-size:72.2px;line-height:72.2px;font-weight:bold;color:#1A1C21;letter-spacing:-0.02px;">Alerts</div>
<div class=t style="left:2244.21px;top:75.54px;font-size:29.84px;line-height:29.84px;font-weight:bold;color:#FFFFFF;letter-spacing:-0.805px;">Manage rules</div>
<div class=t style="left:2162.78px;top:246.56px;font-size:26.04px;line-height:26.04px;font-weight:normal;color:#69707D;letter-spacing:-0.065px;">Updated 55 seconds ago</div>
<div class=t style="left:74.55px;top:246.06px;font-size:28.75px;line-height:28.75px;font-weight:bold;color:#FFFFFF;letter-spacing:-0.26px;">Open</div>
<div class=t style="left:199.80px;top:245.18px;font-size:29.79px;line-height:29.79px;font-weight:normal;color:#0061A6;letter-spacing:0.425px;-webkit-text-stroke:0.45px #0061A6;">Acknowledged</div>
<div class=t style="left:450.12px;top:245.32px;font-size:29.63px;line-height:29.63px;font-weight:normal;color:#0061A6;letter-spacing:0.34px;-webkit-text-stroke:0.45px #0061A6;">Closed</div>
<div class=t style="left:186.50px;top:391.84px;font-size:29.84px;line-height:29.84px;font-weight:bold;color:#FFFFFF;letter-spacing:-1.068px;">Summary</div>
<div class=t style="left:359.49px;top:391.32px;font-size:30.45px;line-height:30.45px;font-weight:normal;color:#0061A6;letter-spacing:-0.499px;">Trend</div>
<div class=t style="left:478.67px;top:391.15px;font-size:30.66px;line-height:30.66px;font-weight:normal;color:#0061A6;letter-spacing:-0.361px;">Counts</div>
<div class=t style="left:618.99px;top:391.43px;font-size:30.32px;line-height:30.32px;font-weight:normal;color:#0061A6;letter-spacing:-0.603px;">Treemap</div>
<div class=t style="left:118.01px;top:526.46px;font-size:34.42px;line-height:34.42px;font-weight:bold;color:#1A1C21;letter-spacing:-0.728px;">Severity levels</div>
<div class=t style="left:903.01px;top:526.86px;font-size:34.42px;line-height:34.42px;font-weight:bold;color:#1A1C21;letter-spacing:-0.809px;">Alerts by name</div>
<div class=t style="left:1689.16px;top:534.97px;font-size:34.3px;line-height:34.3px;font-weight:bold;color:#1A1C21;letter-spacing:-0.819px;">Top alerts by</div>
<div class=t style="left:133.29px;top:635.37px;font-size:25.2px;line-height:25.2px;font-weight:bold;color:#1A1C21;letter-spacing:-0.584px;">Levels</div>
<div class=t style="left:329.59px;top:635.32px;font-size:25.26px;line-height:25.26px;font-weight:bold;color:#1A1C21;letter-spacing:-0.641px;">Count</div>
<div class=t style="left:173.45px;top:702.06px;font-size:25.68px;line-height:25.68px;font-weight:normal;color:#343741;letter-spacing:-0.427px;">Low</div>
<div class=t style="left:410.85px;top:701.66px;font-size:26.16px;line-height:26.16px;font-weight:normal;color:#343741;letter-spacing:0px;">20</div>
<div class=t style="left:173.42px;top:769.46px;font-size:26.04px;line-height:26.04px;font-weight:normal;color:#343741;letter-spacing:-0.081px;">Medium</div>
<div class=t style="left:425.40px;top:769.36px;font-size:26.16px;line-height:26.16px;font-weight:normal;color:#343741;letter-spacing:0px;">6</div>
<div class=t style="left:173.42px;top:836.77px;font-size:26.02px;line-height:26.02px;font-weight:normal;color:#343741;letter-spacing:-0.091px;">High</div>
<div class=t style="left:425.40px;top:836.66px;font-size:26.16px;line-height:26.16px;font-weight:normal;color:#343741;letter-spacing:0px;">5</div>
<div class=t style="left:174.19px;top:903.94px;font-size:26.18px;line-height:26.18px;font-weight:normal;color:#343741;letter-spacing:0.006px;">Critical</div>
<div class=t style="left:425.66px;top:903.96px;font-size:26.16px;line-height:26.16px;font-weight:normal;color:#343741;letter-spacing:0px;">1</div>
<div class=t style="left:624.48px;top:735.94px;font-size:31.14px;line-height:31.14px;font-weight:bold;color:#343741;letter-spacing:1.112px;">32</div>
<div class=t style="left:604.97px;top:774.29px;font-size:28.24px;line-height:28.24px;font-weight:normal;color:#343741;letter-spacing:0.986px;">alerts</div>
<div class=t style="left:918.19px;top:620.33px;font-size:25.13px;line-height:25.13px;font-weight:bold;color:#1A1C21;letter-spacing:-0.641px;">Rule name</div>
<div class=t style="left:1436.99px;top:620.32px;font-size:25.14px;line-height:25.14px;font-weight:bold;color:#1A1C21;letter-spacing:-0.728px;">Count</div>
<div class=t style="left:917.64px;top:685.43px;font-size:25.72px;line-height:25.72px;font-weight:normal;color:#343741;letter-spacing:-0.198px;">Enumeration of Users or Groups via Built...</div>
<div class=t style="left:1518.71px;top:685.06px;font-size:26.16px;line-height:26.16px;font-weight:normal;color:#343741;letter-spacing:0px;">12</div>
<div class=t style="left:918.67px;top:753.19px;font-size:25.65px;line-height:25.65px;font-weight:normal;color:#343741;letter-spacing:-0.251px;">Suspicious JAVA Child Process</div>
<div class=t style="left:1533.00px;top:752.76px;font-size:26.16px;line-height:26.16px;font-weight:normal;color:#343741;letter-spacing:0px;">6</div>
<div class=t style="left:917.63px;top:820.30px;font-size:25.87px;line-height:25.87px;font-weight:normal;color:#343741;letter-spacing:-0.14px;">Malware Prevention Alert</div>
<div class=t style="left:1533.00px;top:820.06px;font-size:26.16px;line-height:26.16px;font-weight:normal;color:#343741;letter-spacing:0px;">5</div>
<div class=t style="left:917.63px;top:888.02px;font-size:25.85px;line-height:25.85px;font-weight:normal;color:#343741;letter-spacing:-0.147px;">LaunchDaemon Creation or Modification ...</div>
<div class=t style="left:1532.74px;top:887.76px;font-size:26.16px;line-height:26.16px;font-weight:normal;color:#343741;letter-spacing:0px;">4</div>
<div class=t style="left:2096.88px;top:540.27px;font-size:28.74px;line-height:28.74px;font-weight:normal;color:#343741;letter-spacing:0.644px;">host.name</div>
<div class=t style="left:1687.95px;top:619.75px;font-size:25.81px;line-height:25.81px;font-weight:bold;color:#343741;letter-spacing:-0.218px;">host.name</div>
<div class=t style="left:1688.45px;top:676.79px;font-size:26.35px;line-height:26.35px;font-weight:normal;color:#343741;letter-spacing:0.089px;">elastic-523</div>
<div class=t style="left:2305.51px;top:676.68px;font-size:26.49px;line-height:26.49px;font-weight:bold;color:#343741;letter-spacing:0.225px;">93.8%</div>
<div class=t style="left:1688.44px;top:740.48px;font-size:26.6px;line-height:26.6px;font-weight:normal;color:#343741;letter-spacing:0.204px;">dev-jbrf</div>
<div class=t style="left:2321.78px;top:740.84px;font-size:26.18px;line-height:26.18px;font-weight:bold;color:#343741;letter-spacing:0.015px;">3.1%</div>
<div class=t style="left:1688.44px;top:804.56px;font-size:26.39px;line-height:26.39px;font-weight:normal;color:#343741;letter-spacing:0.127px;">dev-term</div>
<div class=t style="left:2321.78px;top:804.74px;font-size:26.18px;line-height:26.18px;font-weight:bold;color:#343741;letter-spacing:0.015px;">3.1%</div>
<div class=t style="left:105.91px;top:1156.68px;font-size:25.9px;line-height:25.9px;font-weight:normal;color:#343741;letter-spacing:-0.17px;-webkit-text-stroke:0.45px #343741;">Columns</div>
<div class=t style="left:282.08px;top:1157.21px;font-size:25.27px;line-height:25.27px;font-weight:bold;color:#343741;letter-spacing:-0.418px;">1 field sorted</div>
<div class=t style="left:454.09px;top:1156.80px;font-size:25.75px;line-height:25.75px;font-weight:bold;color:#343741;letter-spacing:-0.207px;">32 alerts</div>
<div class=t style="left:656.91px;top:1156.49px;font-size:26.12px;line-height:26.12px;font-weight:normal;color:#343741;letter-spacing:-0.021px;-webkit-text-stroke:0.45px #343741;">Fields</div>
<div class=t style="left:1617.40px;top:1155.09px;font-size:26.35px;line-height:26.35px;font-weight:normal;color:#0061A6;letter-spacing:0.079px;-webkit-text-stroke:0.45px #0061A6;">Additional filters</div>
<div class=t style="left:1860.11px;top:1157.49px;font-size:25.76px;line-height:25.76px;font-weight:normal;color:#0061A6;letter-spacing:-0.208px;-webkit-text-stroke:0.45px #0061A6;">Grid view</div>
<div class=t style="left:2031.31px;top:1157.38px;font-size:25.89px;line-height:25.89px;font-weight:normal;color:#0061A6;letter-spacing:-0.132px;-webkit-text-stroke:0.45px #0061A6;">Group alerts by: None</div>
<div class=t style="left:126.19px;top:1218.06px;font-size:25.45px;line-height:25.45px;font-weight:bold;color:#343741;letter-spacing:-0.431px;">Actions</div>
<div class=t style="left:469.71px;top:1217.83px;font-size:25.72px;line-height:25.72px;font-weight:bold;color:#343741;letter-spacing:-0.288px;">@timestamp</div>
<div class=t style="left:829.19px;top:1218.29px;font-size:25.17px;line-height:25.17px;font-weight:bold;color:#343741;letter-spacing:-0.69px;">Rule</div>
<div class=t style="left:1189.99px;top:1218.02px;font-size:25.49px;line-height:25.49px;font-weight:bold;color:#343741;letter-spacing:-0.371px;">Severity</div>
<div class=t style="left:1398.79px;top:1218.34px;font-size:25.12px;line-height:25.12px;font-weight:bold;color:#343741;letter-spacing:-0.588px;">Risk Score</div>
<div class=t style="left:1598.78px;top:1218.09px;font-size:25.41px;line-height:25.41px;font-weight:bold;color:#343741;letter-spacing:-0.525px;">Reason</div>
<div class=t style="left:428.89px;top:1277.06px;font-size:26.39px;line-height:26.39px;font-weight:normal;color:#343741;letter-spacing:0.114px;">Mar 21, 2023 @ 09:56:47.220</div>
<div class=t style="left:828.94px;top:1277.59px;font-size:25.76px;line-height:25.76px;font-weight:normal;color:#343741;letter-spacing:-0.183px;">Enumeration of Users or Gr...</div>
<div class=t style="left:1189.04px;top:1277.40px;font-size:25.99px;line-height:25.99px;font-weight:normal;color:#343741;letter-spacing:-0.123px;">low</div>
<div class=t style="left:1543.11px;top:1277.26px;font-size:26.16px;line-height:26.16px;font-weight:normal;color:#343741;letter-spacing:0px;">21</div>
<div class=t style="left:1598px;width:851px;overflow:hidden;top:1277.43px;font-size:25.95px;line-height:25.95px;font-weight:normal;color:#343741;letter-spacing:-0.098px;"><span style="position:relative;left:1.04px">process event with process dsmemberutil, parent process bash, by root on.</span></div>
<div class=t style="left:428.89px;top:1333.06px;font-size:26.39px;line-height:26.39px;font-weight:normal;color:#343741;letter-spacing:0.114px;">Mar 21, 2023 @ 09:51:44.163</div>
<div class=t style="left:828.94px;top:1333.59px;font-size:25.76px;line-height:25.76px;font-weight:normal;color:#343741;letter-spacing:-0.183px;">Enumeration of Users or Gr...</div>
<div class=t style="left:1189.04px;top:1333.40px;font-size:25.99px;line-height:25.99px;font-weight:normal;color:#343741;letter-spacing:-0.123px;">low</div>
<div class=t style="left:1543.11px;top:1333.26px;font-size:26.16px;line-height:26.16px;font-weight:normal;color:#343741;letter-spacing:0px;">21</div>
<div class=t style="left:1598px;width:851px;overflow:hidden;top:1333.38px;font-size:26.01px;line-height:26.01px;font-weight:normal;color:#343741;letter-spacing:-0.069px;"><span style="position:relative;left:1.04px">process event with process dscl, parent process bash, by root on elastic-5.</span></div>
<div class=t style="left:428.89px;top:1389.06px;font-size:26.39px;line-height:26.39px;font-weight:normal;color:#343741;letter-spacing:0.114px;">Mar 21, 2023 @ 09:51:38.010</div>
<div class=t style="left:828.94px;top:1389.58px;font-size:25.78px;line-height:25.78px;font-weight:normal;color:#343741;letter-spacing:-0.192px;">LaunchDaemon Creation or...</div>
<div class=t style="left:1189.04px;top:1389.40px;font-size:25.99px;line-height:25.99px;font-weight:normal;color:#343741;letter-spacing:-0.123px;">low</div>
<div class=t style="left:1543.11px;top:1389.26px;font-size:26.16px;line-height:26.16px;font-weight:normal;color:#343741;letter-spacing:0px;">21</div>
<div class=t style="left:1598px;width:851px;overflow:hidden;top:1389.41px;font-size:25.98px;line-height:25.98px;font-weight:normal;color:#343741;letter-spacing:-0.081px;"><span style="position:relative;left:1.56px">event by root on elastic-523 created low alert LaunchDaemon Creation or .</span></div>
<div class=t style="left:428.89px;top:1445.06px;font-size:26.39px;line-height:26.39px;font-weight:normal;color:#343741;letter-spacing:0.114px;">Mar 20, 2023 @ 10:22:17.795</div>
<div class=t style="left:830.49px;top:1445.70px;font-size:25.63px;line-height:25.63px;font-weight:normal;color:#343741;letter-spacing:-0.274px;">Test Rule</div>
<div class=t style="left:1189.04px;top:1445.40px;font-size:25.99px;line-height:25.99px;font-weight:normal;color:#343741;letter-spacing:-0.123px;">low</div>
<div class=t style="left:1543.11px;top:1445.26px;font-size:26.16px;line-height:26.16px;font-weight:normal;color:#343741;letter-spacing:0px;">21</div>
<div class=t style="left:1598px;width:851px;overflow:hidden;top:1445.38px;font-size:26.01px;line-height:26.01px;font-weight:normal;color:#343741;letter-spacing:-0.065px;"><span style="position:relative;left:2.34px">file event with process touch, file TEST-file.txt, by ubuntu on</span></div>
<div class=t style="left:428.89px;top:1501.05px;font-size:26.4px;line-height:26.4px;font-weight:normal;color:#343741;letter-spacing:0.119px;">Mar 20, 2023 @ 09:54:05.962</div>
<div class=t style="left:829.98px;top:1501.72px;font-size:25.61px;line-height:25.61px;font-weight:normal;color:#343741;letter-spacing:-0.256px;">Suspicious JAVA Child Proc...</div>
<div class=t style="left:1189.04px;top:1501.41px;font-size:25.98px;line-height:25.98px;font-weight:normal;color:#343741;letter-spacing:-0.123px;">medium</div>
<div class=t style="left:1543.11px;top:1501.26px;font-size:26.16px;line-height:26.16px;font-weight:normal;color:#343741;letter-spacing:0px;">47</div>
<div class=t style="left:1598px;width:851px;overflow:hidden;top:1501.48px;font-size:25.89px;line-height:25.89px;font-weight:normal;color:#343741;letter-spacing:-0.126px;"><span style="position:relative;left:1.05px">process event with process bash, parent process java, by</span></div>
<div class=t style="left:428.89px;top:1557.06px;font-size:26.39px;line-height:26.39px;font-weight:normal;color:#343741;letter-spacing:0.114px;">Mar 20, 2023 @ 09:43:44.683</div>
<div class=t style="left:830.49px;top:1557.70px;font-size:25.63px;line-height:25.63px;font-weight:normal;color:#343741;letter-spacing:-0.274px;">Test Rule</div>
<div class=t style="left:1189.04px;top:1557.40px;font-size:25.99px;line-height:25.99px;font-weight:normal;color:#343741;letter-spacing:-0.123px;">low</div>
<div class=t style="left:1543.11px;top:1557.26px;font-size:26.16px;line-height:26.16px;font-weight:normal;color:#343741;letter-spacing:0px;">21</div>
<div class=t style="left:1598px;width:851px;overflow:hidden;top:1557.39px;font-size:26.0px;line-height:26.0px;font-weight:normal;color:#343741;letter-spacing:-0.07px;"><span style="position:relative;left:2.34px">file event with process Finder, file TEST-BC6-test.txt, by</span></div>
<div class=t style="left:428.89px;top:1613.06px;font-size:26.39px;line-height:26.39px;font-weight:normal;color:#343741;letter-spacing:0.114px;">Mar 20, 2023 @ 09:43:38.348</div>
<div class=t style="left:828.93px;top:1613.53px;font-size:25.83px;line-height:25.83px;font-weight:normal;color:#343741;letter-spacing:-0.162px;">Malware Prevention Alert</div>
<div class=t style="left:1189.02px;top:1613.07px;font-size:26.38px;line-height:26.38px;font-weight:normal;color:#343741;letter-spacing:0.129px;">high</div>
<div class=t style="left:1542.85px;top:1613.26px;font-size:26.16px;line-height:26.16px;font-weight:normal;color:#343741;letter-spacing:0px;">73</div>
<div class=t style="left:1598px;width:851px;overflow:hidden;top:1613.48px;font-size:25.89px;line-height:25.89px;font-weight:normal;color:#343741;letter-spacing:-0.12px;"><span style="position:relative;left:1.05px">malware, intrusion_detection, file event with process AUHelperService, par.</span></div>
<div class=t style="left:428.88px;top:1668.99px;font-size:26.47px;line-height:26.47px;font-weight:normal;color:#343741;letter-spacing:0.156px;">Mar 10, 2023 @ 11:13:45.792</div>
<div class=t style="left:828.94px;top:1669.59px;font-size:25.76px;line-height:25.76px;font-weight:normal;color:#343741;letter-spacing:-0.183px;">Enumeration of Users or Gr...</div>
<div class=t style="left:1189.04px;top:1669.40px;font-size:25.99px;line-height:25.99px;font-weight:normal;color:#343741;letter-spacing:-0.123px;">low</div>
<div class=t style="left:1543.11px;top:1669.26px;font-size:26.16px;line-height:26.16px;font-weight:normal;color:#343741;letter-spacing:0px;">21</div>
<div class=t style="left:1598px;width:851px;overflow:hidden;top:1669.38px;font-size:26.01px;line-height:26.01px;font-weight:normal;color:#343741;letter-spacing:-0.069px;"><span style="position:relative;left:1.04px">process event with process dscl, parent process bash, by root on elastic-5.</span></div>
</body></html>
